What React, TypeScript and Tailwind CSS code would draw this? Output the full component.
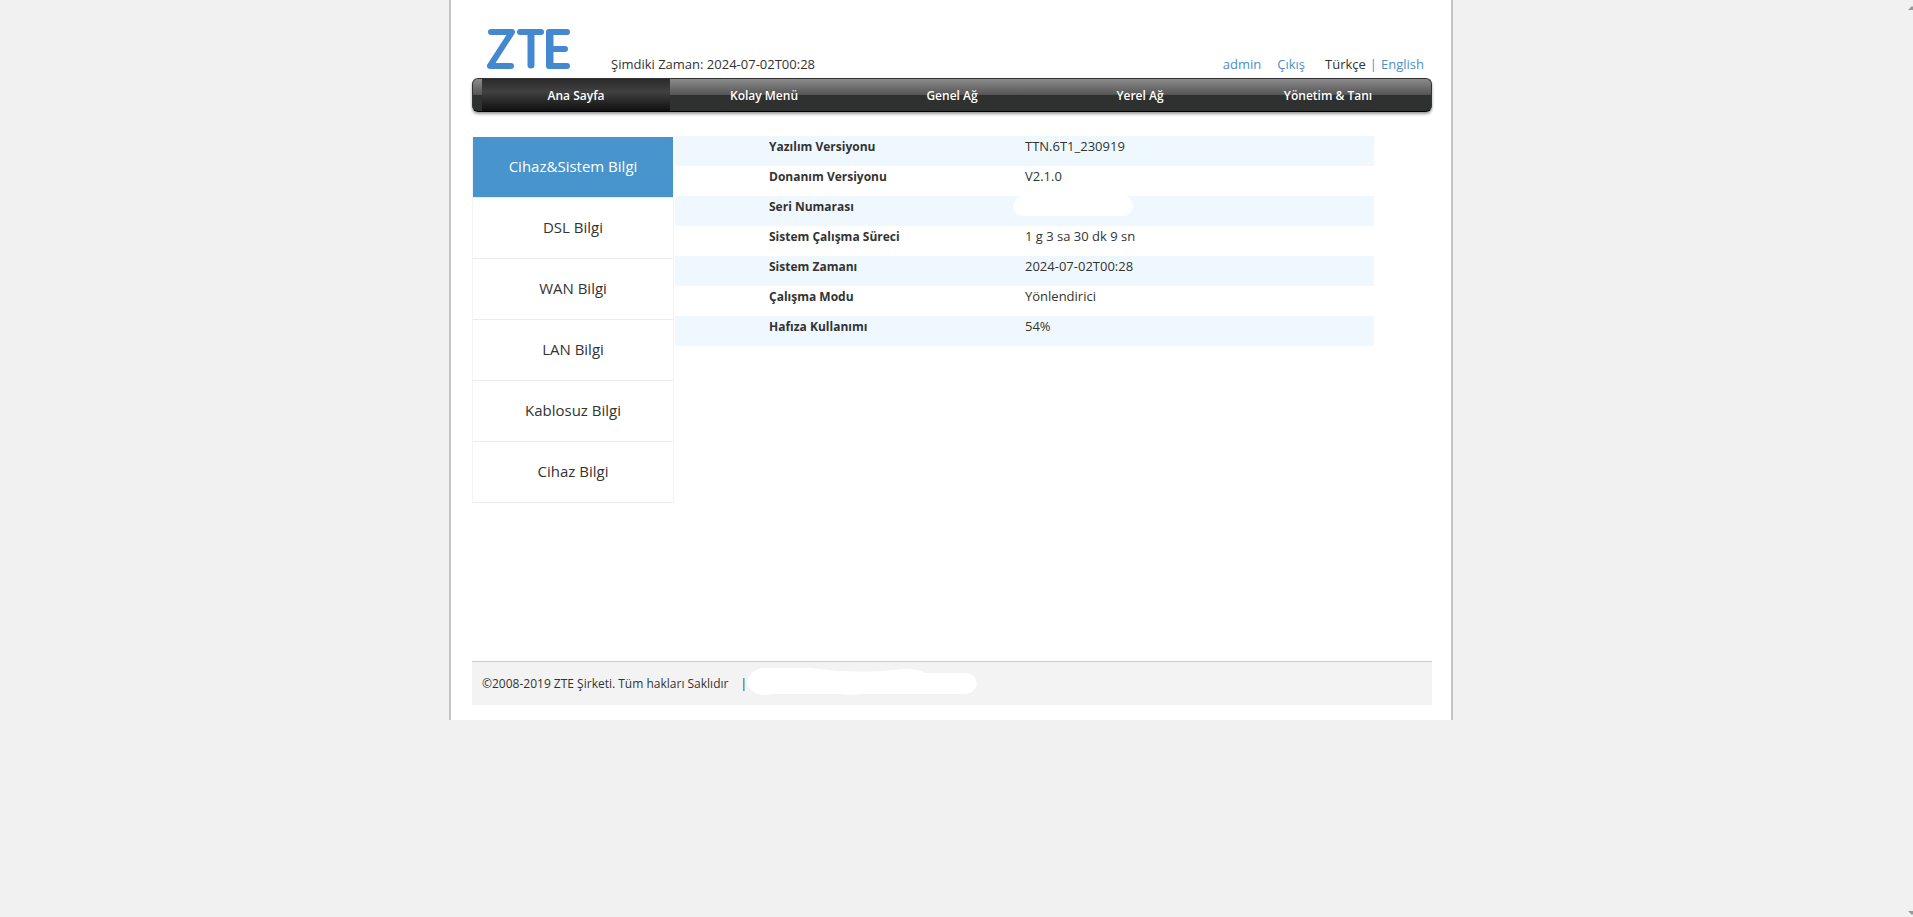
import React, { useState } from "react";
import clsx from "clsx";

const tabs = ["Ana Sayfa", "Kolay Menü", "Genel Ağ", "Yerel Ağ", "Yönetim & Tanı"];

const sections = [
  "Cihaz&Sistem Bilgi",
  "DSL Bilgi",
  "WAN Bilgi",
  "LAN Bilgi",
  "Kablosuz Bilgi",
  "Cihaz Bilgi",
];

const info = [
  { label: "Yazılım Versiyonu", value: "TTN.6T1_230919" },
  { label: "Donanım Versiyonu", value: "V2.1.0" },
  { label: "Seri Numarası", value: null },
  { label: "Sistem Çalışma Süreci", value: "1 g 3 sa 30 dk 9 sn" },
  { label: "Sistem Zamanı", value: "2024-07-02T00:28" },
  { label: "Çalışma Modu", value: "Yönlendirici" },
  { label: "Hafıza Kullanımı", value: "54%" },
];

function Logo() {
  return (
    <svg
      width="84"
      height="42"
      viewBox="0 0 84 42"
      fill="none"
      stroke="#4489d0"
      strokeWidth="6"
      strokeLinecap="round"
      strokeLinejoin="round"
      role="img"
      aria-label="ZTE"
      className="self-start"
    >
      <path d="M4 4H25L3 38H24" />
      <path d="M33 4H54" />
      <path d="M44 6V37" strokeWidth="7" />
      <path d="M80 4H62V38H80M62 21H78" />
      <path d="M63 6V36" strokeWidth="7" />
    </svg>
  );
}

function Header() {
  return (
    <header className="flex items-end pt-7 pl-[15px] pr-2 h-[78px]">
      <Logo />
      <p className="ml-10 mb-1.5 text-[13px] leading-4">Şimdiki Zaman: 2024-07-02T00:28</p>
      <div className="ml-auto mb-1.5 flex text-[13px] leading-4">
        <a href="#admin" className="text-[#4a90c8]">admin</a>
        <a href="#logout" className="ml-4 text-[#4a90c8]">Çıkış</a>
        <span className="ml-5">Türkçe</span>
        <span className="mx-1 text-[#4a90c8]">|</span>
        <a href="#en" className="text-[#4a90c8]">English</a>
      </div>
    </header>
  );
}

function Nav() {
  const [active, setActive] = useState(0);

  return (
    <nav className="flex h-[34px] px-[9px] rounded-md border border-[#333] border-b-black bg-linear-to-b from-[#8c8c8c] from-0% via-[#555] via-50% to-[#2f3130] to-50% shadow-[0_2px_3px_rgba(0,0,0,0.4)]">
      {tabs.map((tab, index) => (
        <button
          key={tab}
          onClick={() => setActive(index)}
          className={clsx(
            "flex-1 pt-0.5 text-xs font-semibold text-white",
            index === active && "bg-linear-to-b from-[#2a2a2a] via-[#414141] via-40% to-[#111]"
          )}
        >
          {tab}
        </button>
      ))}
    </nav>
  );
}

function SideMenu() {
  const [active, setActive] = useState(0);

  return (
    <ul className="mt-px w-[202px] shrink-0 self-start border-x border-[#f4f4f4]">
      {sections.map((section, index) => (
        <li key={section} className="h-[61px] border-b border-[#ececec]">
          <button
            onClick={() => setActive(index)}
            className={clsx(
              "w-full h-full pb-0.5 text-[15px]",
              index === active ? "bg-[#4894cc] text-white" : "bg-white"
            )}
          >
            {section}
          </button>
        </li>
      ))}
    </ul>
  );
}

function InfoTable() {
  return (
    <table className="ml-px w-[699px] table-fixed self-start text-[13px] leading-4">
      <tbody>
        {info.map(({ label, value }) => (
          <tr key={label} className="h-[30px] odd:bg-[#f0f8ff] align-top">
            <th scope="row" className="w-[338px] pt-[3px] pl-[94px] text-left text-xs/4 font-bold">
              {label}
            </th>
            <td className={value ? "pt-0.5 pl-3" : ""}>
              {value ?? <span className="block w-[120px] h-5 rounded-full bg-white" />}
            </td>
          </tr>
        ))}
      </tbody>
    </table>
  );
}

function Footer() {
  return (
    <footer className="flex items-center h-11 pl-2.5 border-t border-[#ccc] bg-[#f3f3f3] text-xs">
      <span>©2008-2019 ZTE Şirketi. Tüm hakları Saklıdır</span>
      <span className="ml-3">|</span>
      <svg width="230" height="28" viewBox="0 0 230 28" className="mb-1" aria-hidden="true">
        <path
          d="M0 14C2 5 8 1 16 0H64C78 1 84 3 97 3C112 4 130 4 146 2C160 0 172 1 178 5H218C234 6 233 25 218 26H116C108 27 100 27 92 26H28L14 27C5 25 1 20 0 14Z"
          fill="#fff"
        />
      </svg>
    </footer>
  );
}

function App() {
  return (
    <div className="flex min-h-screen bg-[#f1f1f1] font-['Open_Sans','Noto_Sans',sans-serif] text-[#333]">
      <div className="flex-1">
        <div className="mx-auto flex w-full max-w-[1004px] min-h-[720px] flex-col border-x-2 border-[#c4c4c4] bg-white pl-[21px] pr-[19px] pb-[15px]">
          <Header />
          <Nav />
          <main className="flex flex-1 pt-6">
            <SideMenu />
            <InfoTable />
          </main>
          <Footer />
        </div>
      </div>
      <div className="flex w-[11px] flex-col items-end justify-between py-1.5 pb-0.5" aria-hidden="true">
        <svg width="5" height="4" viewBox="0 0 5 4" fill="#999">
          <path d="M0 4L4 0L5 1V4Z" />
        </svg>
        <svg width="5" height="4" viewBox="0 0 5 4" fill="#999">
          <path d="M0 0L4 4L5 3V0Z" />
        </svg>
      </div>
    </div>
  );
}

export default App;
